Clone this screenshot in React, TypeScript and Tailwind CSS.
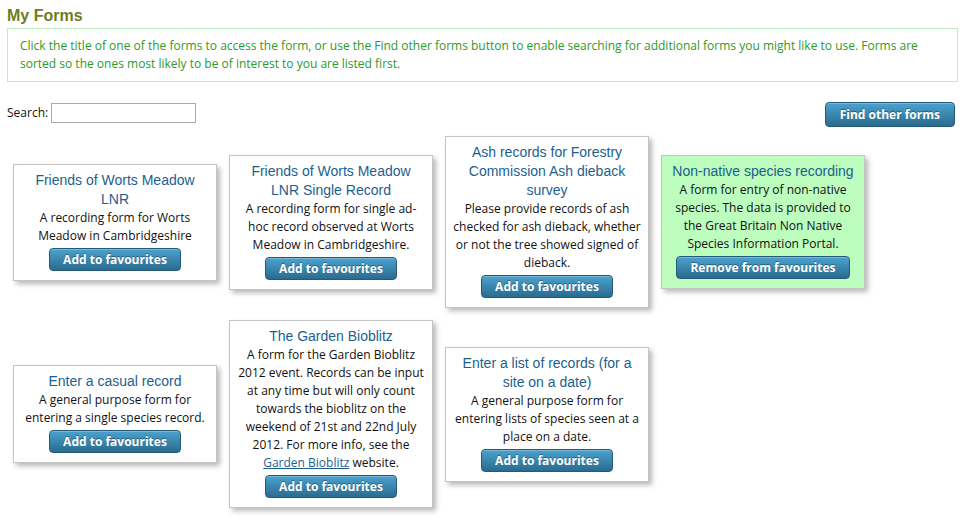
import React from "react";

type Form = {
  title: string;
  description: React.ReactNode;
  favourite?: boolean;
};

const forms: Form[] = [
  {
    title: "Friends of Worts Meadow LNR",
    description: "A recording form for Worts Meadow in Cambridgeshire",
  },
  {
    title: "Friends of Worts Meadow LNR Single Record",
    description: "A recording form for single ad-hoc record observed at Worts Meadow in Cambridgeshire.",
  },
  {
    title: "Ash records for Forestry Commission Ash dieback survey",
    description:
      "Please provide records of ash checked for ash dieback, whether or not the tree showed signed of dieback.",
  },
  {
    title: "Non-native species recording",
    description:
      "A form for entry of non-native species. The data is provided to the Great Britain Non Native Species Information Portal.",
    favourite: true,
  },
  {
    title: "Enter a casual record",
    description: "A general purpose form for entering a single species record.",
  },
  {
    title: "The Garden Bioblitz",
    description: (
      <>
        A form for the Garden Bioblitz 2012 event. Records can be input at any time but will only count towards the
        bioblitz on the weekend of 21st and 22nd July 2012. For more info, see the{" "}
        <a href="#" className="text-[#1c5f8f] underline">
          Garden Bioblitz
        </a>{" "}
        website.
      </>
    ),
  },
  {
    title: "Enter a list of records (for a site on a date)",
    description: "A general purpose form for entering lists of species seen at a place on a date.",
  },
];

function BlueButton({ children, className = "" }: { children: React.ReactNode; className?: string }) {
  return (
    <button
      className={`h-[23px] rounded-[4px] border border-[#245a78] bg-gradient-to-b from-[#4ba3cf] to-[#2a6b8f] text-[12px] font-bold leading-[21px] text-white [text-shadow:0_-1px_0_rgba(0,0,0,0.35)] shadow-[inset_0_1px_0_rgba(255,255,255,0.25)] ${className}`}
    >
      {children}
    </button>
  );
}

function FormCard({ form }: { form: Form }) {
  return (
    <div
      className={`m-[6px] w-[204px] border border-[#c4c4c4] px-[7px] pb-[9px] pt-[6px] text-center shadow-[3px_3px_5px_rgba(0,0,0,0.28)] ${
        form.favourite ? "bg-[#bdfdbd]" : "bg-white"
      }`}
    >
      <a href="#" className="block font-['Liberation_Sans',Arial,sans-serif] text-[14px] leading-[19px] text-[#1c5f8f]">
        {form.title}
      </a>
      <div className="text-[12px] leading-[18px] text-[#111]">{form.description}</div>
      <BlueButton className="mt-[3px] px-[13px]">
        {form.favourite ? "Remove from favourites" : "Add to favourites"}
      </BlueButton>
    </div>
  );
}

export default function App() {
  return (
    <div className="min-h-screen bg-white px-[7px] pt-[6px] font-['Open_Sans',sans-serif]">
      <h1 className="font-['Liberation_Sans',Arial,sans-serif] text-[16px] font-bold leading-[20px] text-[#6e7d1a]">
        My Forms
      </h1>
      <div className="mt-[2px] border border-[#bfeebf] px-[12px] py-[8px] text-[12px] leading-[18px] text-[#2c9a2c]">
        Click the title of one of the forms to access the form, or use the Find other forms button to enable searching for
        additional forms you might like to use. Forms are sorted so the ones most likely to be of interest to you are listed
        first.
      </div>
      <div className="mt-[20px] flex items-start justify-between">
        <label className="flex items-center pt-[1px] text-[12px] text-[#111]">
          Search:
          <input className="ml-[3px] h-[20px] w-[145px] border border-[#aaa] bg-white" />
        </label>
        <BlueButton className="mr-[3px] h-[25px] border-[#1d475e] px-[14px]">Find other forms</BlueButton>
      </div>
      <div className="mt-[3px] flex w-[950px] flex-wrap items-center">
        {forms.map((f) => (
          <FormCard key={f.title} form={f} />
        ))}
      </div>
    </div>
  );
}
